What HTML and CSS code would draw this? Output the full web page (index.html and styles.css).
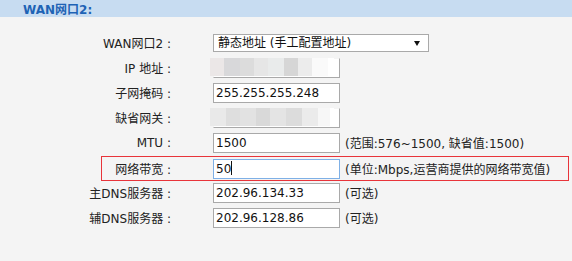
FILE: index.html
```html
<!DOCTYPE html>
<html lang="zh-CN">
<head>
    <meta charset="UTF-8">
    <title>WAN网口2</title>
    <link rel="stylesheet" href="styles.css">
</head>
<body>
    <div class="bar"><span class="bar-title">WAN网口2:</span></div>

    <div class="form">
        <div class="row">
            <span class="lbl">WAN网口2 :</span>
            <div class="select">静态地址 (手工配置地址)<span class="arrow"></span></div>
        </div>
        <div class="row">
            <span class="lbl">IP 地址 :</span>
            <div class="field masked"><span class="mosaic"></span></div>
        </div>
        <div class="row">
            <span class="lbl">子网掩码 :</span>
            <div class="field">255.255.255.248</div>
        </div>
        <div class="row">
            <span class="lbl">缺省网关 :</span>
            <div class="field masked"><span class="mosaic mosaic-b"></span></div>
        </div>
        <div class="row">
            <span class="lbl">MTU :</span>
            <div class="field">1500</div>
            <span class="note">(范围:576~1500, 缺省值:1500)</span>
        </div>
        <div class="row row-hl">
            <span class="lbl">网络带宽 :</span>
            <div class="field focus">50<span class="caret"></span></div>
            <span class="note">(单位:Mbps,运营商提供的网络带宽值)</span>
        </div>
        <div class="row">
            <span class="lbl">主DNS服务器 :</span>
            <div class="field">202.96.134.33</div>
            <span class="note">(可选)</span>
        </div>
        <div class="row">
            <span class="lbl">辅DNS服务器 :</span>
            <div class="field">202.96.128.86</div>
            <span class="note">(可选)</span>
        </div>
    </div>
</body>
</html>
```

FILE: styles.css
```css
* {
    margin: 0;
    padding: 0;
    box-sizing: border-box;
}

body {
    background-color: #f4f4f4;
    font-family: "DejaVu Sans", "Noto Sans CJK SC", sans-serif;
    font-size: 12px;
    color: #222;
}

.bar {
    height: 17px;
    background-color: #c7dcf1;
    padding-left: 23px;
    display: flex;
    align-items: center;
}

.bar-title {
    color: #1e63b5;
    font-weight: bold;
    font-size: 12px;
}

.form {
    padding-top: 13px;
}

.row {
    height: 25px;
    display: flex;
    align-items: center;
}

.lbl {
    width: 171px;
    text-align: right;
    white-space: nowrap;
    margin-right: 42px;
}

.row-hl {
    margin-left: 101px;
    width: 468px;
    border: 1px solid #e8343a;
    margin-top: 1px;
    margin-bottom: -1px;
}

.row-hl .lbl {
    width: 69px;
}

.select {
    position: relative;
    width: 216px;
    height: 18px;
    border: 1px solid #a9a9a9;
    background-color: #fff;
    padding-left: 4px;
    line-height: 16px;
    color: #111;
}

.arrow {
    position: absolute;
    right: 8px;
    top: 6px;
    border-left: 3px solid transparent;
    border-right: 3px solid transparent;
    border-top: 5px solid #111;
}

.field {
    position: relative;
    width: 127px;
    height: 20px;
    border: 1px solid #a9a9a9;
    background-color: #fff;
    padding-left: 2px;
    line-height: 18px;
    color: #111;
}

.field.focus {
    border-color: #7fb0e6;
}

.caret {
    display: inline-block;
    width: 1px;
    height: 14px;
    background-color: #111;
    vertical-align: -2px;
}

.field.masked {
    border-top-color: #f4f4f4;
    border-left-color: #f4f4f4;
}

.mosaic {
    position: absolute;
    left: -4px;
    top: -1px;
    width: 124px;
    height: 18px;
    background: linear-gradient(90deg,
        #ebe7e7 0 14px, #d8d8da 14px 30px, #dcdcdc 30px 44px,
        #e6e6e6 44px 58px, #e9ebeb 58px 74px, #d6d6d6 74px 88px,
        #ececec 88px 102px, #fafafa 102px 118px, #fff 118px);
}

.mosaic-b {
    background: linear-gradient(90deg,
        #e9e9e9 0 16px, #dedede 16px 30px, #e2e2e2 30px 46px,
        #d9d9d9 46px 60px, #e4e4e4 60px 76px, #dcdcdc 76px 92px,
        #ebebeb 92px 108px, #f7f7f7 108px 120px, #fff 120px);
}

.note {
    margin-left: 5px;
    white-space: nowrap;
    color: #222;
}
```
